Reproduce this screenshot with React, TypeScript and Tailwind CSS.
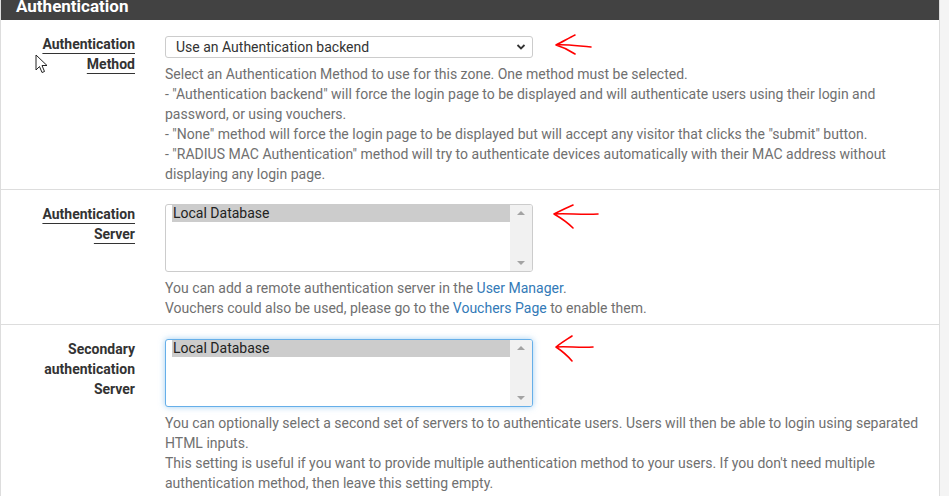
import type { ReactNode } from 'react';

function RedArrow({ w = 50, h = 28, d }: { w?: number; h?: number; d: string }) {
  return (
    <svg width={w} height={h} viewBox={`0 0 ${w} ${h}`} className="shrink-0" fill="none">
      <path d={d} stroke="#ff0000" strokeWidth="1.6" strokeLinecap="round" strokeLinejoin="round" />
    </svg>
  );
}

function Listbox({ focused = false }: { focused?: boolean }) {
  return (
    <div
      className={
        'w-[368px] h-[68px] rounded-[3px] bg-white flex overflow-hidden ' +
        (focused
          ? 'border border-[#66afe9] shadow-[0_0_6px_rgba(102,175,233,0.6)]'
          : 'border border-[#cccccc]')
      }
    >
      <div className="flex-1 pl-[6px]">
        <div className="bg-[#cccccc] text-[#222] text-[14px] leading-[17px] h-[17px] pl-[1px]">Local Database</div>
      </div>
      <div className="w-[22px] bg-[#f1f1f1] flex flex-col items-center justify-between py-[6px]">
        <div className="w-0 h-0 border-l-[4px] border-r-[4px] border-b-[4px] border-l-transparent border-r-transparent border-b-[#a3a3a3]" />
        <div className="w-0 h-0 border-l-[4px] border-r-[4px] border-t-[4px] border-l-transparent border-r-transparent border-t-[#a3a3a3]" />
      </div>
    </div>
  );
}

function Row({
  label,
  underline = true,
  children,
  last = false,
  pb = 'pb-[6px]',
}: {
  label: string[];
  underline?: boolean;
  children: ReactNode;
  last?: boolean;
  pb?: string;
}) {
  return (
    <div className={'flex pt-[14px] ' + pb + ' ' + (last ? '' : 'border-b border-[#dddddd]')}>
      <div className="w-[134px] shrink-0 text-right text-[14px] leading-[20px] font-bold text-[#333333]">
        {label.map((l) => (
          <div key={l}>
            <span className={underline ? 'underline decoration-1 underline-offset-[4px]' : ''}>{l}</span>
          </div>
        ))}
      </div>
      <div className="ml-[30px] flex-1 min-w-0">{children}</div>
    </div>
  );
}

function Help({ lines, gap }: { lines: ReactNode[]; gap: string }) {
  return (
    <div className={gap + ' text-[14px] leading-[20px] text-[#707070] whitespace-nowrap'}>
      {lines.map((l, i) => (
        <div key={i}>{l}</div>
      ))}
    </div>
  );
}

export default function App() {
  return (
    <div className="w-[949px] h-[496px] bg-[#f4f4f4] overflow-hidden font-['Roboto',sans-serif]">
      <div className="w-[940px] h-full bg-white border-l border-r border-[#dddddd] relative">
        <div className="h-[20px] bg-[#424242] text-white text-[17px] font-bold leading-[20px] pl-[15px] overflow-hidden">
          <span className="relative -top-[4px]">Authentication</span>
        </div>

        {/* mouse pointer */}
        <svg className="absolute left-[34px] top-[54px]" width="14" height="20" viewBox="0 0 14 20">
          <path d="M1 1 L1 16 L4.5 12.5 L7 18.5 L9.5 17.5 L7 11.5 L12 11.5 Z" fill="#fff" stroke="#222" strokeWidth="1" strokeLinejoin="round" />
        </svg>

        <Row label={['Authentication', 'Method']} pb="pb-[5px]">
          <div className="flex items-start pt-[2px]">
            <div className="w-[368px] h-[22px] border border-[#cccccc] rounded-[3px] bg-white flex items-center justify-between pl-[10px] pr-[6px] text-[14px] text-[#333]">
              <span>Use an Authentication backend</span>
              <svg width="10" height="8" viewBox="0 0 10 8">
                <path d="M1.5 2 L5 5.5 L8.5 2" stroke="#333" strokeWidth="1.8" fill="none" />
              </svg>
            </div>
            <div className="ml-[20px] -mt-[2px]">
              <RedArrow d="M3 11 C12 10 25 12 38 13 M22 1 C16 4 9 8 3 11 C10 13 16 16 22 20" />
            </div>
          </div>
          <Help
            gap="mt-[2px]"
            lines={[
              'Select an Authentication Method to use for this zone. One method must be selected.',
              '- "Authentication backend" will force the login page to be displayed and will authenticate users using their login and',
              'password, or using vouchers.',
              '- "None" method will force the login page to be displayed but will accept any visitor that clicks the "submit" button.',
              '- "RADIUS MAC Authentication" method will try to authenticate devices automatically with their MAC address without',
              'displaying any login page.',
            ]}
          />
        </Row>

        <Row label={['Authentication', 'Server']}>
          <div className="flex items-start">
            <Listbox />
            <div className="ml-[18px]">
              <RedArrow d="M3 10 C15 9 30 11 47 10 M22 1 C15 4 9 7 3 10 C10 14 16 18 22 24" />
            </div>
          </div>
          <Help
            gap="mt-[6px]"
            lines={[
              <>
                You can add a remote authentication server in the <span className="text-[#337ab7]">User Manager</span>.
              </>,
              <>
                Vouchers could also be used, please go to the <span className="text-[#337ab7]">Vouchers Page</span> to enable them.
              </>,
            ]}
          />
        </Row>

        <Row label={['Secondary', 'authentication', 'Server']} underline={false} last>
          <div className="flex items-start">
            <Listbox focused />
            <div className="ml-[20px] -mt-[4px]">
              <RedArrow d="M3 12 C14 11 26 13 40 12 M19 1 C13 5 8 8 3 12 C9 16 14 20 19 26" />
            </div>
          </div>
          <Help
            gap="mt-[6px]"
            lines={[
              'You can optionally select a second set of servers to to authenticate users. Users will then be able to login using separated',
              'HTML inputs.',
              "This setting is useful if you want to provide multiple authentication method to your users. If you don't need multiple",
              'authentication method, then leave this setting empty.',
            ]}
          />
        </Row>
      </div>
    </div>
  );
}
